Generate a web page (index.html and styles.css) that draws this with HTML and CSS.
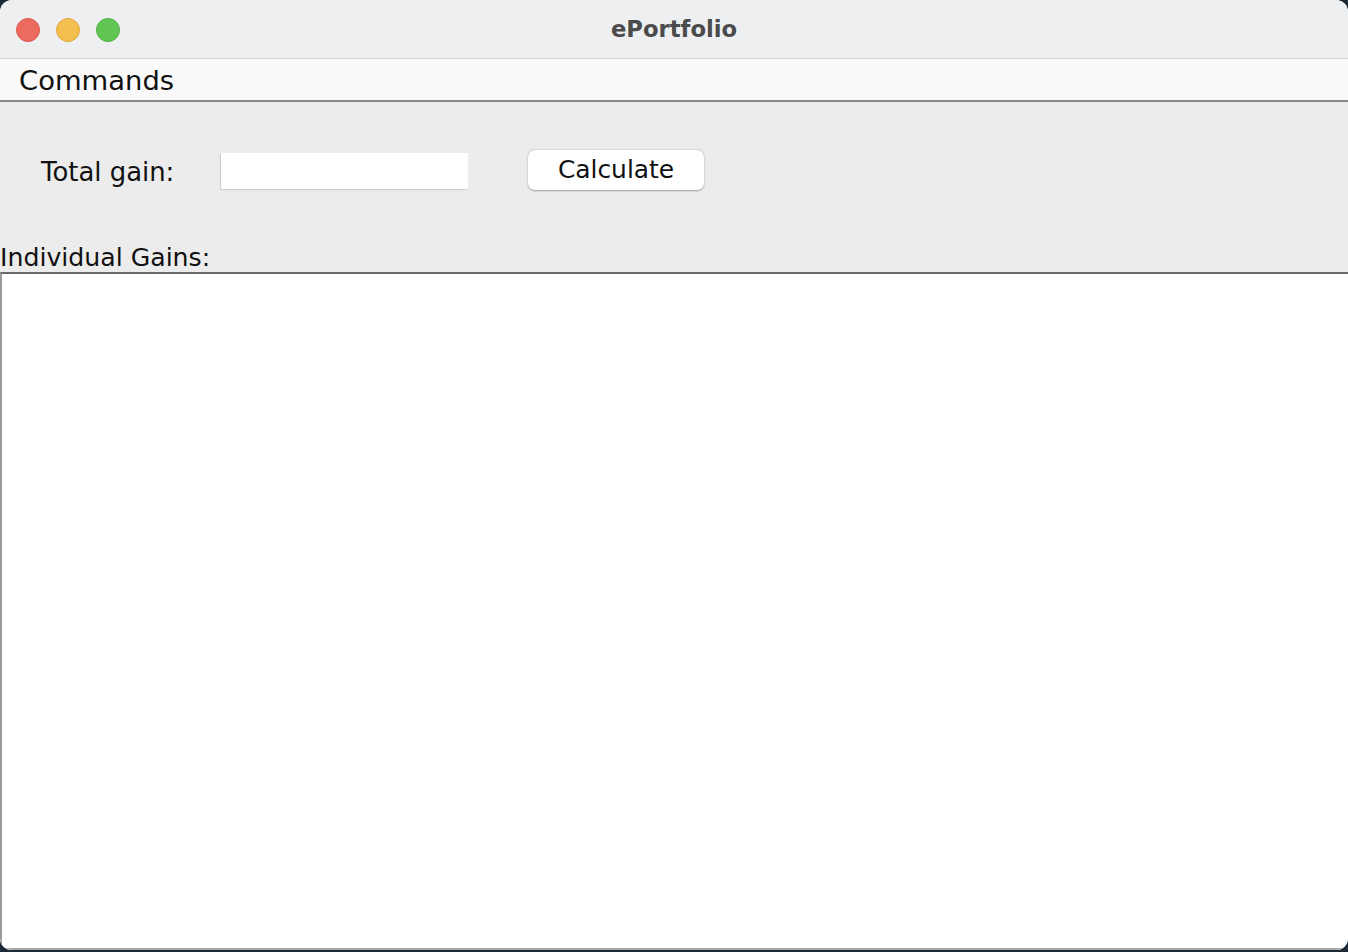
FILE: index.html
```html
<!DOCTYPE html>
<html>
<head>
<meta charset="utf-8">
<title>ePortfolio</title>
<link rel="stylesheet" href="styles.css">
</head>
<body>
<div class="window">
  <div class="titlebar">
    <div class="lights">
      <span class="light red"></span>
      <span class="light yellow"></span>
      <span class="light green"></span>
    </div>
    <div class="title">ePortfolio</div>
  </div>
  <div class="menubar"><span class="menu">Commands</span></div>
  <div class="content">
    <div class="form-row">
      <label class="label">Total gain:</label>
      <div class="field"></div>
      <button class="btn">Calculate</button>
    </div>
    <div class="section-label">Individual Gains:</div>
    <div class="textarea"></div>
  </div>
</div>
</body>
</html>
```
FILE: styles.css
```css
html, body {
  margin: 0;
  padding: 0;
  height: 100%;
}
body {
  background: #1c2a38;
  font-family: "DejaVu Sans", "Noto Sans", sans-serif;
  overflow: hidden;
}
.window {
  width: 1348px;
  height: 950px;
  border-radius: 12px;
  overflow: hidden;
  background: #ececec;
  display: flex;
  flex-direction: column;
}
.titlebar {
  height: 58px;
  flex: none;
  background: #eeeff1;
  border-bottom: 1px solid #d6d6d6;
  position: relative;
  display: flex;
  align-items: center;
  justify-content: center;
}
.lights {
  position: absolute;
  left: 16px;
  top: 18px;
  display: flex;
  gap: 16px;
}
.light {
  width: 24px;
  height: 24px;
  border-radius: 50%;
  box-sizing: border-box;
}
.red { background: #ed6a5e; border: 1px solid #d9594e; }
.yellow { background: #f5bf4f; border: 1px solid #dea73c; }
.green { background: #61c554; border: 1px solid #52ae45; }
.title {
  font-weight: bold;
  font-size: 22.7px;
  color: #4b4b4b;
  margin-top: 0;
}
.menubar {
  height: 43px;
  flex: none;
  background: #fafafa;
  border-bottom: 2px solid #888888;
  display: flex;
  align-items: center;
  padding-left: 19px;
  box-sizing: border-box;
}
.menu {
  font-size: 27.4px;
  color: #111;
  margin-top: 1px;
}
.content {
  flex: 1;
  display: flex;
  flex-direction: column;
  background: #ececec;
}
.form-row {
  display: flex;
  align-items: center;
  height: 136px;
  padding-left: 41px;
  box-sizing: border-box;
}
.label {
  font-size: 25.9px;
  color: #111;
  width: 180px;
  margin-top: 3px;
}
.field {
  width: 247px;
  height: 36px;
  background: #fff;
  box-shadow: -1px 1px 1px rgba(0,0,0,0.12);
  margin-top: 1px;
}
.btn {
  margin-left: 60px;
  width: 176px;
  height: 40px;
  background: #fff;
  border: none;
  border-radius: 7px;
  box-shadow: 0 0.5px 2px rgba(0,0,0,0.35);
  font-family: "DejaVu Sans", sans-serif;
  font-size: 24.9px;
  color: #111;
  padding: 0 0 2px 0;
}
.section-label {
  font-size: 25.2px;
  color: #111;
  height: 34px;
  line-height: 28px;
  padding-top: 6px;
  box-sizing: border-box;
}
.textarea {
  flex: 1;
  background: #fff;
  border-top: 2px solid #6a6a6a;
  border-left: 2px solid #9a9a9a;
  border-bottom: 2px solid #a8a8a8;
}
```
